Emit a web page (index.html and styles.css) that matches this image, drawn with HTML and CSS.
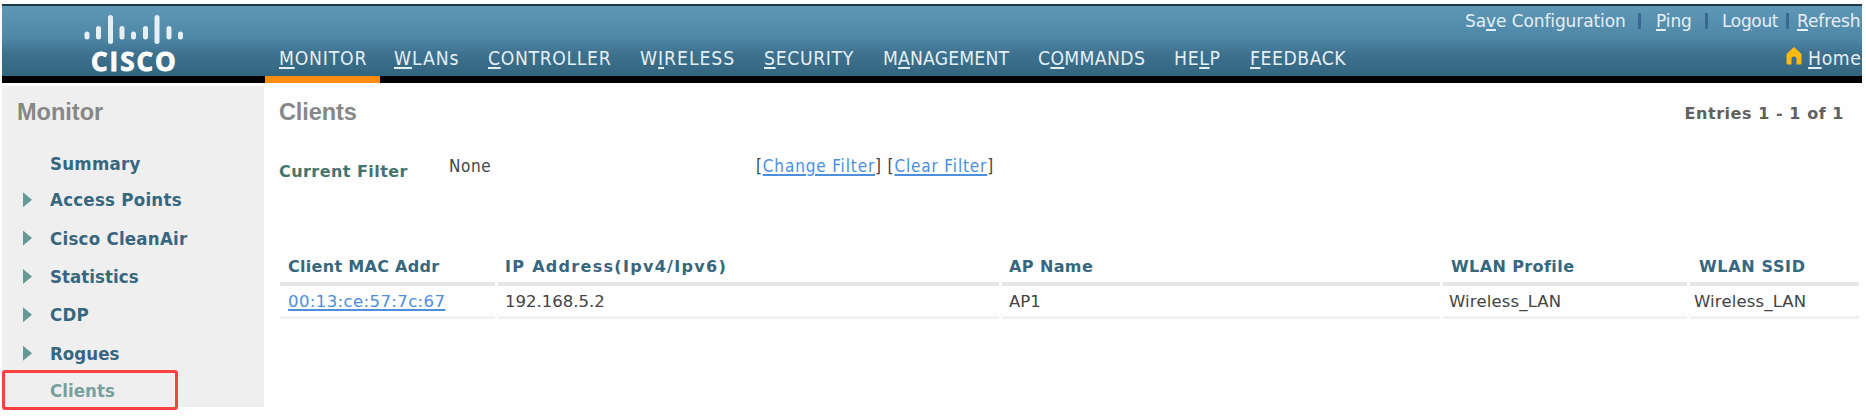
FILE: index.html
```html
<!DOCTYPE html>
<html lang="en">
<head>
<meta charset="utf-8">
<title>Clients</title>
<link rel="stylesheet" href="styles.css">
</head>
<body>
<div class="app">
  <header class="header">
    <div class="brand">
      <svg class="bars" width="102" height="31" viewBox="0 0 102 31">
        <g stroke="#e6f0f5" stroke-width="5" stroke-linecap="round">
          <path d="M4 20v3M15.500 14.500v8.500M27.500 3.500v24M39 14.500v8.500M50.500 20v3M62.500 14.500v8.500M74 3.500v24M86 14.500v8.500M97.500 20v3"/>
        </g>
      </svg>
      <span class="wordmark">CISCO</span>
    </div>
    <div class="bar">
      <div class="utility">
        <a class="u-save">Sa<u>v</u>e Configuration</a><i class="sep"></i>
        <a class="u-ping"><u>P</u>ing</a><i class="sep"></i>
        <a class="u-logout">Lo<u>g</u>out</a><i class="sep"></i>
        <a class="u-refresh"><u>R</u>efresh</a>
      </div>
      <div class="menu">
        <nav class="nav">
          <a class="tab active"><u>M</u>ONITOR</a>
          <a class="tab t-wlans"><u>W</u>LANs</a>
          <a class="tab t-controller"><u>C</u>ONTROLLER</a>
          <a class="tab t-wireless">W<u>I</u>RELESS</a>
          <a class="tab t-security"><u>S</u>ECURITY</a>
          <a class="tab t-management">M<u>A</u>NAGEMENT</a>
          <a class="tab t-commands">C<u>O</u>MMANDS</a>
          <a class="tab t-help">HE<u>L</u>P</a>
          <a class="tab t-feedback"><u>F</u>EEDBACK</a>
        </nav>
        <a class="home">
          <svg width="16" height="18" viewBox="0 0 16 18"><path d="M8 0L15.500 7V16.500Q15.500 17.500 14 17.500H10.500V11.500Q10.500 9.500 8 9.500T5.500 11.500V17.500H2Q.5 17.500 .5 16.500V7Z" fill="#fdb913"/></svg>
          <span><u>H</u>ome</span>
        </a>
      </div>
    </div>
  </header>
  <div class="body">
    <aside class="sidebar">
      <h2 class="title">Monitor</h2>
      <ul class="tree">
        <li class="item first">Summary</li>
        <li class="item branch">Access Points</li>
        <li class="item branch">Cisco CleanAir</li>
        <li class="item branch narrow">Statistics</li>
        <li class="item branch">CDP</li>
        <li class="item branch narrow">Rogues</li>
        <li class="item current narrow">Clients</li>
      </ul>
    </aside>
    <main class="content">
      <div class="heading">
        <h1 class="title">Clients</h1>
        <span class="entries">Entries 1 - 1 of 1</span>
      </div>
      <div class="filter">
        <span class="filter-label">Current Filter</span>
        <span class="filter-value">None</span>
        <span class="filter-links">[<a>Change Filter</a>] [<a>Clear Filter</a>]</span>
      </div>
      <div class="table">
        <div class="th client">Client MAC Addr</div>
        <div class="th ip">IP Address(Ipv4/Ipv6)</div>
        <div class="th">AP Name</div>
        <div class="th profile">WLAN Profile</div>
        <div class="th ssid">WLAN SSID</div>
        <div class="td mac"><a>00:13:ce:57:7c:67</a></div>
        <div class="td">192.168.5.2</div>
        <div class="td">AP1</div>
        <div class="td wlan wlan-profile">Wireless_LAN</div>
        <div class="td wlan">Wireless_LAN</div>
      </div>
    </main>
  </div>
</div>
</body>
</html>
```
FILE: styles.css
```css
* { box-sizing: border-box; }
body {
  margin: 0;
  height: 419px;
  background: #fefefe;
  font-family: "DejaVu Sans", sans-serif;
}
u { text-decoration-thickness: 1.5px; text-underline-offset: 2px; }
.app { width: 1860px; height: 419px; padding-top: 4px; margin-left: 2px; }
.header {
  display: flex;
  height: 79px;
  overflow: hidden;
  border-top: 2px solid #1c3947;
  background: linear-gradient(#5f97b7 0, #4f87a6 32px, #3d718e 48px, #33657f 70px, #000 70px);
}
.brand {
  width: 263px;
  padding: 8px 0 0 81px;
  display: flex;
  flex-direction: column;
}
.bars { display: block; }
.wordmark {
  margin: 4px 0 0 8px;
  font: bold 26px/24px "Open Sans", sans-serif;
  letter-spacing: 2px;
  -webkit-text-stroke: .9px #fff;
  color: #fff;
}
.bar { flex: 1; min-width: 0; color: #e4eff4; }
.utility {
  display: flex;
  align-items: center;
  height: 29px;
  padding-left: 1200px;
  font-size: 17px;
  letter-spacing: -.1px;
  white-space: nowrap;
}
.sep { width: 3px; height: 16px; flex: none; background: #3b6890; }
.utility a { flex: none; }
.u-save { width: 173px; }
.u-ping { width: 64px; padding-left: 15px; }
.u-logout { width: 78px; padding-left: 14px; letter-spacing: -.35px; }
.u-refresh { padding-left: 8px; }
.menu {
  display: flex;
  height: 48px;
  font-family: "DejaVu Sans Condensed", "DejaVu Sans", sans-serif;
  font-size: 19.200px;
  letter-spacing: .65px;
}
.nav { display: flex; width: 1521px; flex: none; }
.tab { padding: 13px 0 0 14px; line-height: 22px; height: 48px; white-space: nowrap; }
.active { width: 115px; letter-spacing: .8px; border-bottom: 7px solid #fb8c0e; }
.t-wlans { width: 94px; letter-spacing: .9px; }
.t-controller { width: 152px; }
.t-wireless { width: 124px; letter-spacing: .95px; }
.t-security { width: 119px; }
.t-management { width: 155px; letter-spacing: .15px; }
.t-commands { width: 136px; letter-spacing: .35px; }
.t-help { width: 76px; }
.t-feedback { letter-spacing: .55px; }
.home { display: flex; flex: none; gap: 6px; padding-top: 13px; line-height: 22px; }
.home svg { margin-top: -1px; }
.body { display: flex; }
.sidebar { width: 262px; height: 321px; margin-top: 3px; background: #efefef; }
.title {
  margin: 0;
  font: bold 23.500px/28px "Liberation Sans", sans-serif;
  color: #878787;
}
.sidebar .title { padding: 12px 0 0 15px; }
.tree { list-style: none; margin: 0; padding: 20.500px 0 0; }
.item {
  display: flex;
  align-items: center;
  height: 38.400px;
  padding-left: 48px;
  font: bold 18.500px "DejaVu Sans Condensed", "DejaVu Sans", sans-serif;
  letter-spacing: .25px;
  color: #36677f;
}
.item.first { height: 34px; }
.item.narrow { letter-spacing: .05px; }
.branch { padding-left: 21px; }
.branch::before {
  content: "";
  width: 9px;
  height: 15px;
  margin-right: 18px;
  background: #659995;
  clip-path: polygon(0 0, 100% 50%, 0 100%);
}
.item.current {
  width: 176px;
  height: 40px;
  margin-top: -2px;
  padding-left: 45px;
  border: 3px solid #fa4141;
  border-radius: 3px;
  color: #78a09c;
}
.content { flex: 1; }
.heading { display: flex; justify-content: space-between; padding: 15px 18px 0 15px; }
.heading .title { letter-spacing: -.1px; }
.entries { font-weight: bold; font-size: 16px; letter-spacing: .55px; line-height: 32px; color: #606060; }
.filter { display: flex; padding: 25px 0 0 15px; height: 125px; font-size: 17px; line-height: 22px; color: #444; }
.filter-label { width: 170px; padding-top: 6px; font-weight: bold; font-size: 16px; letter-spacing: .45px; color: #45746f; }
.filter-value { width: 307px; letter-spacing: .6px; }
.filter-links { letter-spacing: .85px; }
.filter-value, .filter-links { font-family: "DejaVu Sans Condensed", sans-serif; }
a { white-space: nowrap; }
.filter-links a, .td a { color: #4c8fdd; text-decoration: underline; text-decoration-thickness: 2px; text-underline-offset: 2px; }
.table {
  display: grid;
  grid-template-columns: 215px 501px 438px 244px 169px;
  column-gap: 3px;
  padding-left: 16px;
}
.th {
  height: 31px;
  padding-left: 7px;
  font-weight: bold;
  font-size: 16px;
  line-height: 24px;
  letter-spacing: .4px;
  color: #36677f;
  border-bottom: 4px solid #e7e7e7;
}
.th.client { padding-left: 8px; letter-spacing: .3px; }
.ip { letter-spacing: 1.300px; }
.profile { padding-left: 8px; }
.ssid { padding-left: 9px; letter-spacing: .65px; }
.td { height: 33px; padding: 5px 0 0 7px; font-size: 16.500px; line-height: 22px; color: #444; border-bottom: 3px solid #f2f2f2; }
.mac { padding-left: 8px; letter-spacing: .4px; }
.wlan { padding-left: 4px; letter-spacing: .15px; }
.wlan-profile { padding-left: 6px; }
```
